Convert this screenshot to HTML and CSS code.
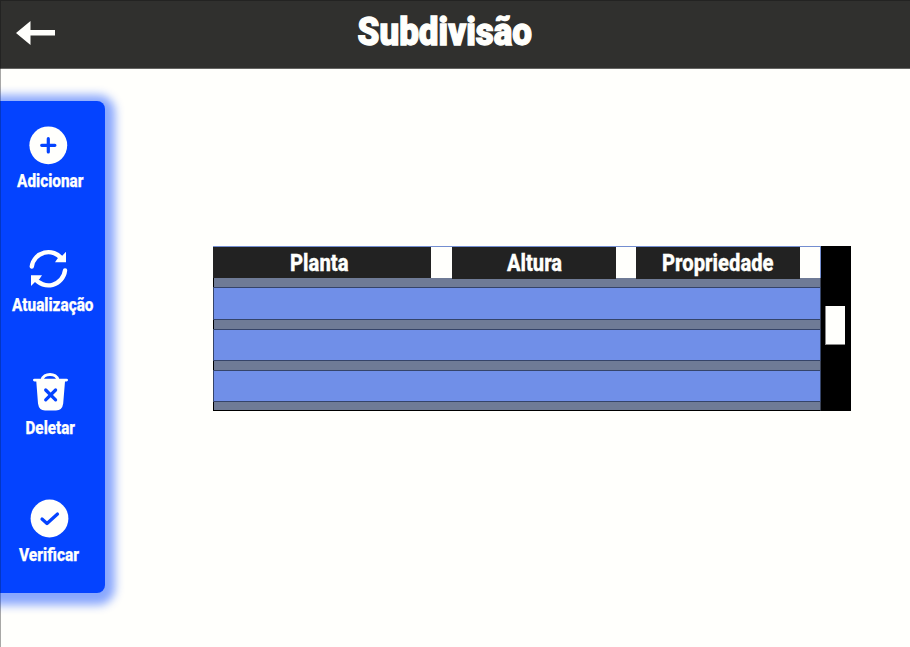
FILE: index.html
```html
<!DOCTYPE html>
<html lang="pt">
<head>
<meta charset="utf-8">
<title>Subdivisão</title>
<link rel="stylesheet" href="styles.css">
</head>
<body>
<header class="header">
  <svg class="back" viewBox="0 0 39 24"><path d="M0 12 14.500 0V9H39V14.500H14.500V24Z"/></svg>
  <svg class="title" viewBox="0 0 176 50"><text x="0.500" y="35" textLength="174.500" lengthAdjust="spacingAndGlyphs">Subdivisão</text></svg>
</header>
<main class="main">
  <nav class="sidebar">
    <a class="item add">
      <svg class="icon" viewBox="0 0 38 38"><circle class="fill" cx="19.300" cy="19.300" r="18.900"/><path class="cut" d="M19.300 12.700v13.200M12.700 19.300h13.200"/></svg>
      <svg class="label" viewBox="0 0 105 22"><text x="17" y="17" textLength="66.500" lengthAdjust="spacingAndGlyphs">Adicionar</text></svg>
    </a>
    <a class="item update">
      <svg class="icon" viewBox="0 0 38 38"><path class="arc" d="M2.800 16.500A16.800 16.800 0 0 1 33 9M36 20.500A16.800 16.800 0 0 1 5.800 28.500"/><path class="fill" d="M37 1.800V12.300H26L28.500 8.500L33 6ZM2 36V25.200H13L10.500 29L6 32Z"/></svg>
      <svg class="label" viewBox="0 0 105 22"><text x="12" y="16.500" textLength="81.500" lengthAdjust="spacingAndGlyphs">Atualização</text></svg>
    </a>
    <a class="item delete">
      <svg class="icon" viewBox="0 0 38 38"><path class="handle" d="M11 7C12.500 -.5 25.500 -.5 27 7"/><path class="fill" d="M3 5.700H35.500Q37 5.700 37 7.100T35.500 8.500H34L32.200 30.500Q31.200 37.500 25 37.500H14Q8 37.500 7 30.500L5.300 8.500H3.500Q2 8.500 2 7.100T3.500 5.700Z"/><path class="cut" d="M14.700 17l9.900 9.900M24.600 17l-9.900 9.900"/></svg>
      <svg class="label" viewBox="0 0 105 22"><text x="25.500" y="16.200" textLength="49.500" lengthAdjust="spacingAndGlyphs">Deletar</text></svg>
    </a>
    <a class="item verify">
      <svg class="icon" viewBox="0 0 38 38"><circle class="fill" cx="19.500" cy="19.500" r="18.900"/><path class="cut" d="M12 20l5 4.500L27.500 15"/></svg>
      <svg class="label" viewBox="0 0 105 22"><text x="19" y="17" textLength="60" lengthAdjust="spacingAndGlyphs">Verificar</text></svg>
    </a>
  </nav>
  <section class="table">
    <div class="grid">
      <div class="head">
        <div class="cell plant"><svg viewBox="0 0 218 31"><text x="77" y="23.700" textLength="58.500" lengthAdjust="spacingAndGlyphs">Planta</text></svg></div>
        <div class="cell height"><svg viewBox="0 0 164 31"><text x="55" y="23.700" textLength="55" lengthAdjust="spacingAndGlyphs">Altura</text></svg></div>
        <div class="cell property"><svg viewBox="0 0 164 31"><text x="26" y="24" textLength="111.500" lengthAdjust="spacingAndGlyphs">Propriedade</text></svg></div>
      </div>
      <div class="gap first"></div><div class="row"></div>
      <div class="gap"></div><div class="row"></div>
      <div class="gap"></div><div class="row"></div>
      <div class="gap last"></div>
    </div>
    <div class="scrollbar"><div class="thumb"></div></div>
  </section>
</main>
</body>
</html>
```
FILE: styles.css
```css
* { box-sizing: border-box; }
body {
  margin: 0;
  height: 647px;
  overflow: hidden;
  background: #fffffc;
  font-family: Roboto, "Liberation Sans", sans-serif;
}
svg { display: block; flex: none; overflow: visible; }
.header {
  height: 69px;
  display: flex;
  align-items: flex-start;
  background: #30302e;
  border-top: 1px solid #232322;
  border-left: 1px solid #232322;
  border-bottom: 1px solid #656563;
  fill: #fffffc;
}
.back { width: 39px; height: 24px; margin: 20px 0 0 15px; }
.title {
  width: 176px;
  height: 50px;
  margin: 9px 0 0 302px;
  font-size: 38.5px;
  font-weight: 900;
  stroke: #fffffc;
  stroke-width: 1.3px;
}
.main {
  height: 578px;
  display: flex;
  align-items: flex-start;
  border-left: 1px solid #a8a8a6;
}
.sidebar {
  width: 105px;
  height: 492px;
  margin: 32px 0 0 -1px;
  padding-top: 25px;
  border-left: 1px solid #0436c4;
  border-radius: 0 8px 8px 0;
  background: #0443ff;
  box-shadow: 1px 3px 10px 9px rgba(4, 67, 255, .47);
}
.item { display: block; }
.icon { width: 38px; height: 38px; margin-left: 28px; }
.label {
  width: 105px;
  height: 22px;
  margin: 6px 0 0 -1px;
  fill: #fffffc;
  stroke: #fffffc;
  stroke-width: .25px;
  font-size: 17.5px;
  font-weight: 800;
}
.add { height: 124px; }
.update { height: 123px; }
.delete { height: 126px; }
.delete .icon { margin-left: 30px; }
.delete .label { margin-top: 7px; }
.verify .icon { margin-left: 29px; }
.verify .label { margin-top: 7px; }
.fill { fill: #fffffc; }
.cut, .arc, .handle { fill: none; stroke-linecap: round; stroke-linejoin: round; }
.cut { stroke: #0443ff; stroke-width: 3.2px; }
.arc { stroke: #fffffc; stroke-width: 4.4px; }
.handle { stroke: #fffffc; stroke-width: 3px; }
.table {
  display: flex;
  width: 638px;
  height: 165px;
  margin: 177px 0 0 108px;
  background: #000;
}
.grid { width: 608px; }
.head {
  display: flex;
  height: 32px;
  background: #fffffc;
  border-top: 1px solid #748ed0;
  border-right: 1px solid #748ed0;
}
.cell {
  width: 164px;
  height: 32px;
  background: #222;
  fill: #fffffc;
  stroke: #fffffc;
  stroke-width: .3px;
  font-size: 23.2px;
  font-weight: 800;
}
.cell svg { width: 100%; height: 31px; }
.plant { width: 218px; height: 31px; }
.height { margin-left: 21px; }
.property { margin-left: 20px; }
.gap {
  height: 9px;
  background: #6f7b96;
  border-left: 1px solid #000;
  border-right: 1px solid #3b4253;
}
.last { border-bottom: 1px solid #000; }
.row {
  height: 32px;
  background: #708fe8;
  border: 1px solid #354469;
}
.first + .row { height: 33px; }
.scrollbar { width: 30px; padding: 60px 0 0 4px; }
.thumb {
  width: 20px;
  height: 39px;
  background: #fffffc;
  border-left: 1px solid #888;
  border-bottom: 1px solid #888;
}
```
